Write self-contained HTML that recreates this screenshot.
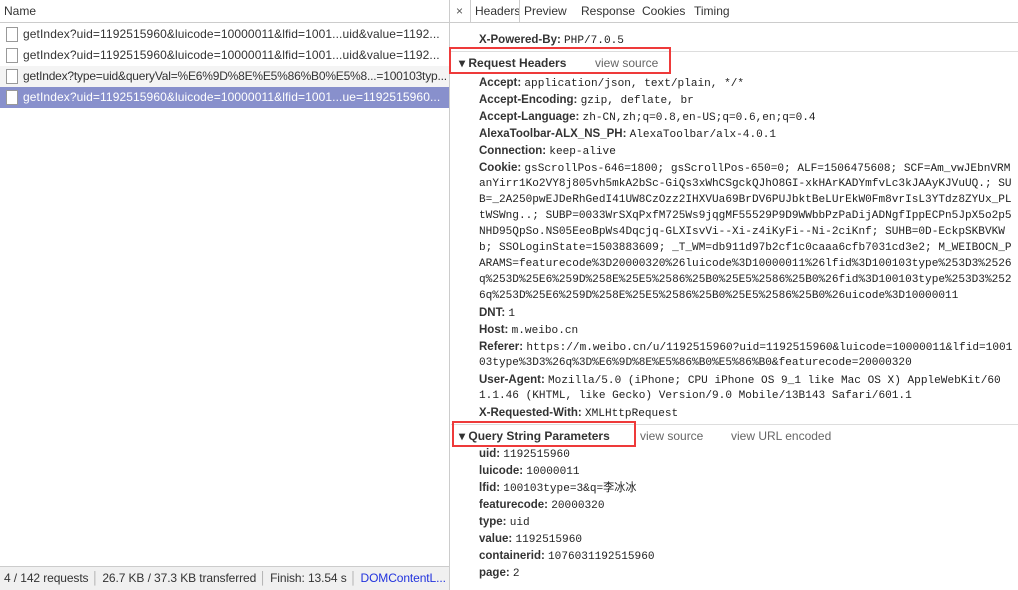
<!DOCTYPE html>
<html><head><meta charset="utf-8"><style>
*{margin:0;padding:0;box-sizing:border-box}
body{width:1018px;height:590px;overflow:hidden;background:#fff;font-family:"Liberation Sans","Noto Sans CJK SC",sans-serif;font-size:12px;color:#222;position:relative}
.abs{position:absolute;white-space:nowrap}
#left{position:absolute;left:0;top:0;width:450px;height:590px;border-right:1px solid #ccc}
.hdr{position:absolute;left:0;top:0;width:1018px;height:23px;border-bottom:1px solid #ccc}
.row{position:absolute;left:0;width:449px;height:21px;line-height:21px;padding-left:23px;font-size:12px;color:#333;white-space:nowrap;overflow:hidden;letter-spacing:0.1px}
.row .cb{position:absolute;left:6px;top:3px;width:12px;height:15px;border:1px solid #999;background:#fff}
.status{position:absolute;left:0;top:566px;width:449px;height:24px;background:#f0f0f0;border-top:1px solid #ccc;line-height:22px;padding-left:4px;font-size:12px;color:#333;white-space:nowrap;overflow:hidden;letter-spacing:-0.1px}
.tab{position:absolute;top:0;height:23px;line-height:23px;font-size:12px;color:#333}
#right{position:absolute;left:451px;top:24px;width:567px;height:566px;overflow:hidden}
.ln{position:absolute;left:28px;height:17px;line-height:17px;white-space:nowrap;font-size:11.5px}
.ln b{color:#333;font-weight:bold;font-size:11.5px}
.m{font-family:"Liberation Mono","Noto Sans CJK SC",monospace;font-size:11.1px;color:#222}
.sec{position:absolute;left:0;width:567px;border-top:1px solid #ddd;height:24px;line-height:22px;padding-left:8px;font-weight:bold;font-size:12px;color:#333}
.sec span{font-weight:normal;color:#666;position:absolute}
.red{position:absolute;border:2px solid #ee3a3a}
</style></head><body>
<div class="hdr"></div>
<div class="abs" style="left:4px;top:4px;color:#333">Name</div>
<div id="left">
<div class="row" style="top:24px"><div class="cb"></div>getIndex?uid=1192515960&amp;luicode=10000011&amp;lfid=1001...uid&amp;value=1192...</div>
<div class="row" style="top:45px"><div class="cb"></div>getIndex?uid=1192515960&amp;luicode=10000011&amp;lfid=1001...uid&amp;value=1192...</div>
<div class="row" style="top:66px;background:#f4f4f4;letter-spacing:-0.2px"><div class="cb"></div>getIndex?type=uid&amp;queryVal=%E6%9D%8E%E5%86%B0%E5%8...=100103typ...</div>
<div class="row" style="top:87px;background:#8890cc;color:#fff"><div class="cb"></div>getIndex?uid=1192515960&amp;luicode=10000011&amp;lfid=1001...ue=1192515960...</div>
<div class="status">4 / 142 requests <span style="color:#aaa">&#x2502;</span> 26.7 KB / 37.3 KB transferred <span style="color:#aaa">&#x2502;</span> Finish: 13.54 s <span style="color:#aaa">&#x2502;</span> <span style="color:#2233dd">DOMContentL...</span></div>
</div>
<div class="tab" style="left:456px;color:#555">×</div>
<div class="abs" style="left:470px;top:0;width:1px;height:23px;background:#ccc"></div>
<div class="tab" style="left:475px">Headers</div>
<div class="abs" style="left:519px;top:0;width:1px;height:23px;background:#ccc"></div>
<div class="tab" style="left:524px">Preview</div>
<div class="tab" style="left:581px">Response</div>
<div class="tab" style="left:642px">Cookies</div>
<div class="tab" style="left:694px">Timing</div>
<div id="right">
<div class="ln" style="top:-14px"><b>X-Log-Uid:</b> <span class="m">1697702241</span></div>
<div class="ln" style="top:8px"><b>X-Powered-By:</b> <span class="m">PHP/7.0.5</span></div>
<div class="sec" style="top:27px">▾ Request Headers<span style="left:144px">view source</span></div>
<div class="ln" style="top:51px"><b>Accept:</b> <span class="m">application/json, text/plain, */*</span></div>
<div class="ln" style="top:68px"><b>Accept-Encoding:</b> <span class="m">gzip, deflate, br</span></div>
<div class="ln" style="top:85px"><b>Accept-Language:</b> <span class="m">zh-CN,zh;q=0.8,en-US;q=0.6,en;q=0.4</span></div>
<div class="ln" style="top:102px"><b>AlexaToolbar-ALX_NS_PH:</b> <span class="m">AlexaToolbar/alx-4.0.1</span></div>
<div class="ln" style="top:119px"><b>Connection:</b> <span class="m">keep-alive</span></div>
<div class="ln" style="top:136px"><b>Cookie:</b> <span class="m">gsScrollPos-646=1800; gsScrollPos-650=0; ALF=1506475608; SCF=Am_vwJEbnVRM</span></div>
<div class="ln m" style="top:152px">anYirr1Ko2VY8j805vh5mkA2bSc-GiQs3xWhCSgckQJhO8GI-xkHArKADYmfvLc3kJAAyKJVuUQ.; SU</div>
<div class="ln m" style="top:168px">B=_2A250pwEJDeRhGedI41UW8CzOzz2IHXVUa69BrDV6PUJbktBeLUrEkW0Fm8vrIsL3YTdz8ZYUx_PL</div>
<div class="ln m" style="top:184px">tWSWng..; SUBP=0033WrSXqPxfM725Ws9jqgMF55529P9D9WWbbPzPaDijADNgfIppECPn5JpX5o2p5</div>
<div class="ln m" style="top:200px">NHD95QpSo.NS05EeoBpWs4Dqcjq-GLXIsvVi--Xi-z4iKyFi--Ni-2ciKnf; SUHB=0D-EckpSKBVKW</div>
<div class="ln m" style="top:216px">b; SSOLoginState=1503883609; _T_WM=db911d97b2cf1c0caaa6cfb7031cd3e2; M_WEIBOCN_P</div>
<div class="ln m" style="top:232px">ARAMS=featurecode%3D20000320%26luicode%3D10000011%26lfid%3D100103type%253D3%2526</div>
<div class="ln m" style="top:248px">q%253D%25E6%259D%258E%25E5%2586%25B0%25E5%2586%25B0%26fid%3D100103type%253D3%252</div>
<div class="ln m" style="top:264px">6q%253D%25E6%259D%258E%25E5%2586%25B0%25E5%2586%25B0%26uicode%3D10000011</div>
<div class="ln" style="top:281px"><b>DNT:</b> <span class="m">1</span></div>
<div class="ln" style="top:298px"><b>Host:</b> <span class="m">m.weibo.cn</span></div>
<div class="ln" style="top:315px"><b>Referer:</b> <span class="m">https://m.weibo.cn/u/1192515960?uid=1192515960&amp;luicode=10000011&amp;lfid=1001</span></div>
<div class="ln m" style="top:331px">03type%3D3%26q%3D%E6%9D%8E%E5%86%B0%E5%86%B0&amp;featurecode=20000320</div>
<div class="ln" style="top:348px"><b>User-Agent:</b> <span class="m">Mozilla/5.0 (iPhone; CPU iPhone OS 9_1 like Mac OS X) AppleWebKit/60</span></div>
<div class="ln m" style="top:364px">1.1.46 (KHTML, like Gecko) Version/9.0 Mobile/13B143 Safari/601.1</div>
<div class="ln" style="top:381px"><b>X-Requested-With:</b> <span class="m">XMLHttpRequest</span></div>
<div class="sec" style="top:400px;background:#fff">▾ Query String Parameters<span style="left:189px">view source</span><span style="left:280px">view URL encoded</span></div>
<div class="ln" style="top:422px"><b>uid:</b> <span class="m">1192515960</span></div>
<div class="ln" style="top:439px"><b>luicode:</b> <span class="m">10000011</span></div>
<div class="ln" style="top:456px"><b>lfid:</b> <span class="m">100103type=3&amp;q=李冰冰</span></div>
<div class="ln" style="top:473px"><b>featurecode:</b> <span class="m">20000320</span></div>
<div class="ln" style="top:490px"><b>type:</b> <span class="m">uid</span></div>
<div class="ln" style="top:507px"><b>value:</b> <span class="m">1192515960</span></div>
<div class="ln" style="top:524px"><b>containerid:</b> <span class="m">1076031192515960</span></div>
<div class="ln" style="top:541px"><b>page:</b> <span class="m">2</span></div>
</div>
<div class="red" style="left:449px;top:47px;width:222px;height:27px"></div>
<div class="red" style="left:452px;top:421px;width:184px;height:26px"></div>
</body></html>
